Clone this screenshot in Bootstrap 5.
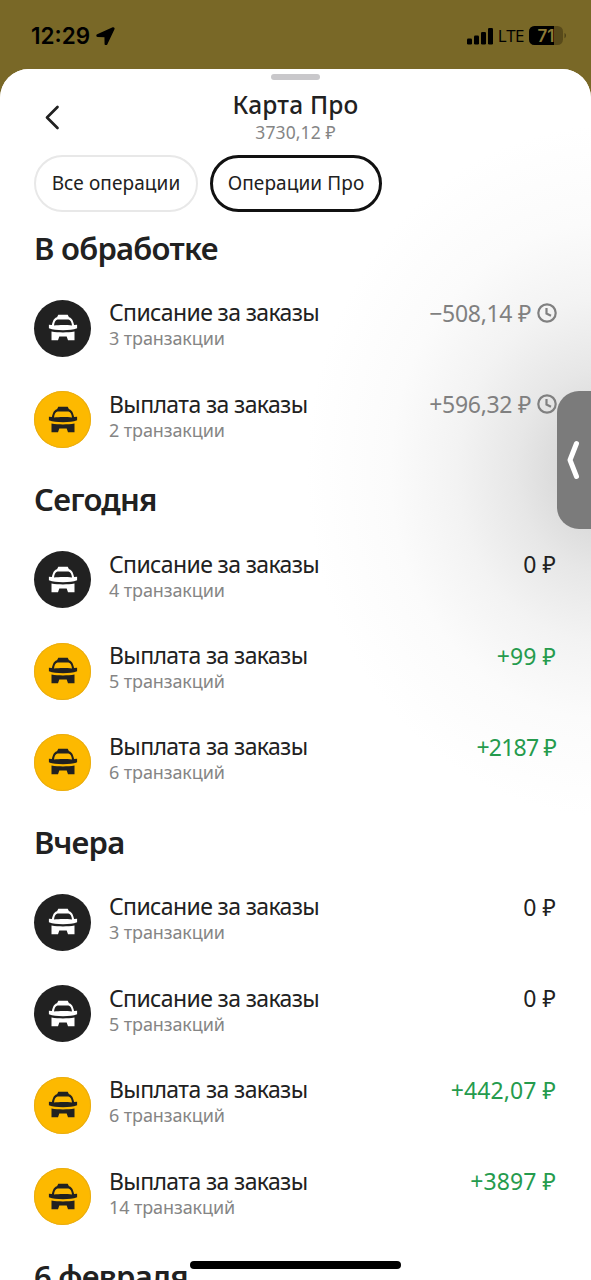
<!DOCTYPE html>
<html lang="ru">
<head>
<meta charset="utf-8">
<meta name="viewport" content="width=device-width, initial-scale=1">
<title>Карта Про</title>
<link href="https://cdn.jsdelivr.net/npm/bootstrap@5.3.0/dist/css/bootstrap.min.css" rel="stylesheet">
<style>
  html, body { height: 1280px; overflow: hidden; }
  body { background: #796827; color: #212121; font-family: "Noto Sans", "Open Sans", sans-serif; line-height: 1; }
  .status-bar { height: 69px; padding: 3px 25px 0 31px; color: #000; }
  .clock { font: 600 22.5px/1 Inter, sans-serif; letter-spacing: 0; }
  .place { margin-left: 6px; }
  .net { font: 500 17px/1 "Open Sans", sans-serif; letter-spacing: -.5px; margin: -2px 5px 0 4px; }
  .sheet { height: 1211px; border-radius: 29px 29px 0 0; background: #fff; }
  .glow { inset: 0; background: radial-gradient(ellipse 300px 345px at 606px 402px, #d2d2d2 0, #dadada 15%, #e7e7e7 30%, #f3f3f3 50%, #fbfbfb 72%, #fff 100%); }
  .grabber { width: 49px; height: 6px; margin-top: 5px; background: #c9c8cb; }
  .sheet-head { height: 74.5px; padding-top: 9.5px; }
  .back { left: 44px; top: 24px; }
  .sheet-title { font-size: 24.5px; font-weight: 500; line-height: 30px; letter-spacing: .2px; }
  .balance { font-size: 17.5px; line-height: 24px; color: #858585; letter-spacing: .1px; }
  .chips { padding-left: 34px; gap: 12px; height: 57px; }
  .chip { height: 57px; border: 2px solid #e8e8e8; border-radius: 29px; background: transparent; color: #212121; font-size: 19px; letter-spacing: .1px; padding: 0; }
  .chip-all { width: 164px; }
  .chip-pro { width: 172px; border: 3px solid #111; }
  .ops { margin-top: 2.4px; padding: 0 35px 0 34px; }
  .day { height: 68.6px; font-size: 31px; font-weight: 600; line-height: 68.6px; letter-spacing: -.75px; margin: 0; white-space: nowrap; }
  .op { height: 91.43px; gap: 18px; }
  .avatar { width: 57px; height: 57px; background: #212121; color: #fff; --ink: #212121; }
  .avatar.pay { background: #fdb900; color: #212121; --ink: #fdb900; box-shadow: inset 0 0 0 1px #e9ad12; }
  .op-text { margin-top: -8px; }
  .op-name { font-size: 23px; line-height: 28px; letter-spacing: -.62px; }
  .op-note { font-size: 18px; line-height: 24px; color: #858585; letter-spacing: -.1px; }
  .sum { font-size: 23px; line-height: 28px; margin-top: -31px; letter-spacing: .1px; white-space: nowrap; }
  .sum.wait { color: #808080; margin-right: -1px; gap: 6px; letter-spacing: -.3px; }
  .sum.plus { color: #259b4d; }
  .sum.whole { letter-spacing: -.8px; }
  .side-tab { right: 0; top: 391px; width: 34px; height: 138px; border-radius: 22px 0 0 22px; background: #7b7b7b; }
  .home-bar { left: 190px; top: 1261px; width: 211px; height: 8px; background: #000; }
</style>
</head>
<body class="position-relative">
<svg class="d-none">
  <symbol id="taxi" viewBox="0 0 30 28">
    <path fill="currentColor" d="M10.300.8h9.400l1.300 2.500c3 .6 4.200 3.700 5.100 7.700l3-.3v3.600c-4 1.500-8 1.900-14.100 1.900S4.900 15.800.9 14.300v-3.600l3 .3C4.800 7 6 3.900 9 3.300z"/>
    <path fill="var(--ink)" d="M9.500 5.600h11c2.200.3 3.100 3 3.500 6-5-.7-13-.7-18 0 .4-3 1.300-5.700 3.500-6z"/>
    <path fill="currentColor" d="M3.500 17.500c7 1.200 16 1.200 23 0v8.700H20l-1.300-3.700h-7.400L10 26.200H3.500z"/>
  </symbol>
  <symbol id="wait" viewBox="0 0 20 20">
    <g fill="none" stroke="currentColor" stroke-width="2.200"><circle cx="10" cy="10" r="8.700"/><path d="M9.500 5v5.500l4.500 2.200"/></g>
  </symbol>
</svg>

<header class="status-bar d-flex align-items-center justify-content-between">
  <div class="d-flex align-items-center">
    <span class="clock">12:29</span>
    <svg class="place" width="19" height="18" viewBox="0 0 19 18"><path d="M17 1 1.500 8c-.7.400-.5 1.300.3 1.300l7.400.3.100 7.200c0 .9 1 1 1.400.2L17.800 1.900c.2-.7-.1-1.100-.8-.9z" stroke="#000" stroke-width="1.500" stroke-linejoin="round"/></svg>
  </div>
  <div class="d-flex align-items-center">
    <svg width="28" height="17" viewBox="0 0 28 17"><rect x="1" y="10.500" width="5" height="6" rx="1.300"/><rect x="8" y="7.500" width="5" height="9" rx="1.300"/><rect x="15" y="4" width="5" height="12.500" rx="1.300"/><rect x="22" y="0" width="5" height="16.500" rx="1.300"/></svg>
    <span class="net">LTE</span>
    <svg width="37" height="20" viewBox="0 0 37 20"><rect width="34" height="19" rx="5.500" fill="#584a1a"/><path d="M5.500 0H25v19H5.500A5.500 5.500 0 0 1 0 13.500v-8A5.500 5.500 0 0 1 5.500 0z"/><path d="M35.500 7c2 .8 2 4.400 0 5.200z" fill="#4d4118"/><text x="17" y="15.500" text-anchor="middle" font-family="Inter, sans-serif" font-weight="600" font-size="17" fill="#8d7b36">71</text></svg>
  </div>
</header>

<main class="sheet position-relative overflow-hidden">
  <div class="glow position-absolute"></div>
  <div class="position-relative">
    <div class="d-flex justify-content-center"><div class="grabber rounded-pill"></div></div>
    <div class="sheet-head position-relative text-center">
      <svg class="back position-absolute" width="17" height="26" viewBox="0 0 17 26" fill="none" stroke="#212121" stroke-width="2.700" stroke-linecap="round" stroke-linejoin="round"><path d="M13.500 3 3 13.500 13.500 24"/></svg>
      <div class="sheet-title">Карта Про</div><div class="balance">3730,12 ₽</div>
    </div>
    <div class="chips d-flex">
      <button class="chip chip-all">Все операции</button>
      <button class="chip chip-pro">Операции Про</button>
    </div>
    <div class="ops">
      <section>
        <h2 class="day">В обработке</h2>
        <div class="op d-flex align-items-center"><div class="avatar rounded-circle d-flex align-items-center justify-content-center"><svg width="30" height="28"><use href="#taxi"/></svg></div><div class="op-text flex-grow-1"><div class="op-name">Списание за заказы</div><div class="op-note">3 транзакции</div></div><div class="sum wait d-flex align-items-center">−508,14 ₽<svg width="20" height="20"><use href="#wait"/></svg></div></div>
        <div class="op d-flex align-items-center"><div class="avatar pay rounded-circle d-flex align-items-center justify-content-center"><svg width="30" height="28"><use href="#taxi"/></svg></div><div class="op-text flex-grow-1"><div class="op-name">Выплата за заказы</div><div class="op-note">2 транзакции</div></div><div class="sum wait d-flex align-items-center">+596,32 ₽<svg width="20" height="20"><use href="#wait"/></svg></div></div>
      </section>
      <section>
        <h2 class="day">Сегодня</h2>
        <div class="op d-flex align-items-center"><div class="avatar rounded-circle d-flex align-items-center justify-content-center"><svg width="30" height="28"><use href="#taxi"/></svg></div><div class="op-text flex-grow-1"><div class="op-name">Списание за заказы</div><div class="op-note">4 транзакции</div></div><div class="sum">0 ₽</div></div>
        <div class="op d-flex align-items-center"><div class="avatar pay rounded-circle d-flex align-items-center justify-content-center"><svg width="30" height="28"><use href="#taxi"/></svg></div><div class="op-text flex-grow-1"><div class="op-name">Выплата за заказы</div><div class="op-note">5 транзакций</div></div><div class="sum plus">+99 ₽</div></div>
        <div class="op d-flex align-items-center"><div class="avatar pay rounded-circle d-flex align-items-center justify-content-center"><svg width="30" height="28"><use href="#taxi"/></svg></div><div class="op-text flex-grow-1"><div class="op-name">Выплата за заказы</div><div class="op-note">6 транзакций</div></div><div class="sum plus whole">+2187 ₽</div></div>
      </section>
      <section>
        <h2 class="day">Вчера</h2>
        <div class="op d-flex align-items-center"><div class="avatar rounded-circle d-flex align-items-center justify-content-center"><svg width="30" height="28"><use href="#taxi"/></svg></div><div class="op-text flex-grow-1"><div class="op-name">Списание за заказы</div><div class="op-note">3 транзакции</div></div><div class="sum">0 ₽</div></div>
        <div class="op d-flex align-items-center"><div class="avatar rounded-circle d-flex align-items-center justify-content-center"><svg width="30" height="28"><use href="#taxi"/></svg></div><div class="op-text flex-grow-1"><div class="op-name">Списание за заказы</div><div class="op-note">5 транзакций</div></div><div class="sum">0 ₽</div></div>
        <div class="op d-flex align-items-center"><div class="avatar pay rounded-circle d-flex align-items-center justify-content-center"><svg width="30" height="28"><use href="#taxi"/></svg></div><div class="op-text flex-grow-1"><div class="op-name">Выплата за заказы</div><div class="op-note">6 транзакций</div></div><div class="sum plus">+442,07 ₽</div></div>
        <div class="op d-flex align-items-center"><div class="avatar pay rounded-circle d-flex align-items-center justify-content-center"><svg width="30" height="28"><use href="#taxi"/></svg></div><div class="op-text flex-grow-1"><div class="op-name">Выплата за заказы</div><div class="op-note">14 транзакций</div></div><div class="sum plus">+3897 ₽</div></div>
      </section>
      <section><h2 class="day">6 февраля</h2></section>
    </div>
  </div>
</main>
<div class="side-tab position-absolute d-flex align-items-center justify-content-center"><svg width="14" height="40" viewBox="0 0 14 40" fill="none" stroke="#fff" stroke-width="5" stroke-linecap="round" stroke-linejoin="round"><path d="M9.500 3.500 3 20l6.500 16.500"/></svg></div>
<div class="home-bar position-absolute rounded-pill"></div>
<script src="https://cdn.jsdelivr.net/npm/bootstrap@5.3.0/dist/js/bootstrap.bundle.min.js"></script>
</body>
</html>
